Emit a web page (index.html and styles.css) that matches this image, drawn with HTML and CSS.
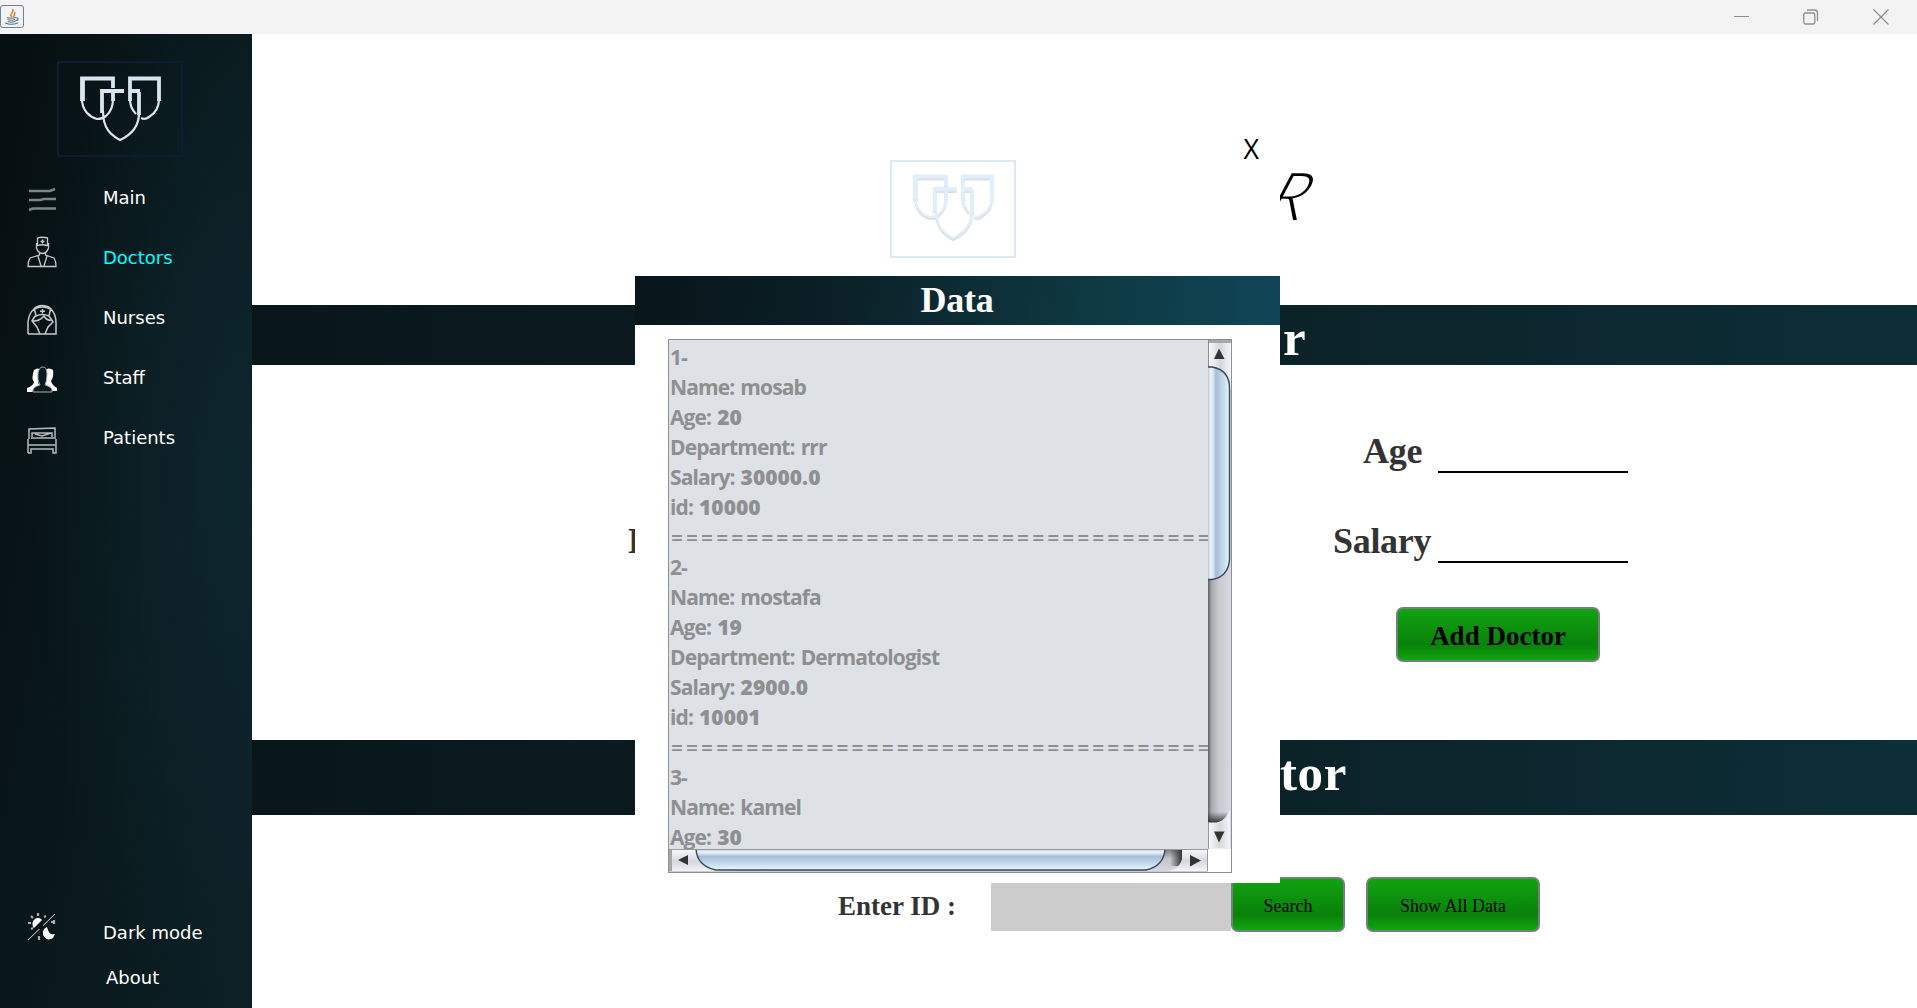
FILE: index.html
```html
<!DOCTYPE html>
<html lang="en">
<head>
<meta charset="utf-8">
<title>Doctors</title>
<link rel="stylesheet" href="styles.css">
</head>
<body>
<svg width="0" height="0" class="defs">
  <symbol id="shields" viewBox="0 0 126 96">
    <g fill="none" stroke="currentColor">
      <path stroke-width="3.800" d="M25 40V17.500H56V27M26 17V40M56 31V40M73 40V17.500H102V40M45 52V30H67M73 30H83M82 31V54"/>
      <path stroke-width="2.200" d="M25 38C25 50 33 56 40 58Q45 58 49 55Q56 49 56 38M73 38C73 46 76 50 79 53M84 57Q88 59 92 56Q102 50 102 38M46 50C46 68 54 74 63 79C74 74 82 66 82 52"/>
    </g>
  </symbol>
</svg>
<header class="titlebar">
  <svg class="java" width="24" height="24" viewBox="0 0 24 24">
    <rect x=".5" y=".5" width="23" height="22" rx="2.500" fill="#f1f3f5" stroke="#6d8296"/>
    <path d="M12 12C8 9 15 8 12.500 4M13 12C17 9 12 10 15.500 7" fill="none" stroke="#e8832a" stroke-width="1.500"/>
    <path d="M7 12.500Q11 14 16 12.500M7.500 14.500Q11 16 15 14.500M8 16.500Q11 18 15 16.500M5 18Q11 20.500 18 18M16 13Q19 12 17.500 15L15 16" fill="none" stroke="#56768f" stroke-width="1.200"/>
  </svg>
  <div class="controls">
    <svg width="15" height="16" viewBox="0 0 15 16"><path d="M0 7.500H15" stroke="#8e8e8e" fill="none"/></svg>
    <svg width="16" height="16" viewBox="0 0 16 16"><g fill="none" stroke="#8e8e8e" stroke-width="1.300"><rect x=".8" y="4" width="11" height="11" rx="1.500"/><path d="M4 1H11.500Q14.500 1 14.500 4V12"/></g></svg>
    <svg width="16" height="16" viewBox="0 0 16 16"><path d="M.5 .5L15.500 15.500M15.500 .5L.5 15.500" stroke="#8e8e8e" stroke-width="1.200" fill="none"/></svg>
  </div>
</header>
<div class="window">
  <nav class="sidebar">
    <div class="logo"><svg width="126" height="96"><use href="#shields"/></svg></div>
    <a class="item"><svg width="30" height="30" viewBox="0 0 30 30"><path d="M2 6L23 6L28 4M2 15H13L17 14H29M2 25L6 23.500H29" fill="none" stroke="#7d8585" stroke-width="2.500"/></svg><span>Main</span></a>
    <a class="item active"><svg class="doc" width="30" height="32" viewBox="0 0 30 32"><g fill="none" stroke="#c4cacb" stroke-width="1.300"><path d="M10.500 9.500V2Q15 .5 20.500 2V9.500Q15 8 10.500 9.500ZM9.500 7V12Q11 17 15.500 17.500Q20 17 21.500 12V7M12.500 16V19L3 22Q1 25 1 30.500H29Q29 25 27 22L18.500 19V16M11 20L14 30M20 20L17 30"/><path d="M15.500 3.500V7.500M13.500 5.500H17.500" stroke-width="1.600"/></g></svg><span>Doctors</span></a>
    <a class="item"><svg width="30" height="32" viewBox="0 0 30 32"><g fill="none" stroke="#c4cacb" stroke-width="1.500"><path d="M1 30V18Q2 9 7 5Q10 1.500 15 1.500Q21 1.500 24 5Q29 10 29 19V30H1M9 12L7.500 5Q15 1 23.500 5L22 12Q15 9 9 12ZM8 12L5 17L10 23L13 30M22 12L26 18L21 23L18 30M6 17Q13 17 17 12Q20 17 24 16"/><path d="M15.500 5V9.500M13 7.200H18"/></g></svg><span>Nurses</span></a>
    <a class="item"><svg width="30" height="30" viewBox="0 0 30 30"><path d="M7 5Q11 2 14 5L11 9V18L13 21L8 24L5 27H0V23Q6 21 7 17Q4 14 7 5ZM18 5Q22 2 26 5Q27 12 24 16Q25 20 30 23V26H25L19 20V8Z" fill="#fff"/><path d="M6 27Q5 22 13 20Q10 16 11 8Q12 2 16 2Q20 2 20 9Q20 16 18 20Q26 22 25 27Z" fill="#0b1a1f" stroke="#a4abac"/></svg><span>Staff</span></a>
    <a class="item"><svg width="30" height="30" viewBox="0 0 30 30"><g fill="none" stroke="#b4babb" stroke-width="1.500"><path d="M2 14V4L28 3V14M1 28V14M29 14V28H26V24H4V28H1M1 20H29M5 12V8H25V12M8 9L15 11L24 8M4 13H27"/></g></svg><span>Patients</span></a>
    <a class="item mode"><svg width="30" height="30" viewBox="0 0 30 30"><path d="M1 28L28 2" stroke="#ddd" fill="none"/><circle cx="11" cy="11" r="5" fill="#fff"/><path d="M6 16L16 6V17H6Z" fill="#091619"/><path d="M6 15Q4 9 9 7Q14 6 15 8L7 16ZM20 15Q15 17 16 23Q20 30 26 26L28 22Q22 24 20 15Z" fill="#fff"/><path d="M11 1V4M1 11H4M4 4L6 6M17 5L19 4M24 10H28M12 24V28M4 17L6 16M27 8V12" stroke="#a9b0b0" stroke-width="2.200"/></svg><span>Dark mode</span></a>
    <a class="item about"><span>About</span></a>
  </nav>
  <main class="page">
    <div class="hero"><span>R</span></div>
    <h1 class="band"><span>r</span></h1>
    <section class="form">
      <div class="line"><span class="age">Age</span><i class="blank"></i></div>
      <div class="line"><span class="dept">D</span><span class="salary">Salary</span><i class="blank"></i></div>
      <button class="btn add">Add Doctor</button>
    </section>
    <h1 class="band tall"><span>tor</span></h1>
    <section class="search">
      <label>Enter ID :</label>
      <div class="field"></div>
      <button class="btn find">Search</button>
      <button class="btn all">Show All Data</button>
    </section>
  </main>
</div>
<div class="popup">
  <div class="top">
    <div class="mark"><svg width="126" height="96"><use href="#shields" y="1" color="#dcdfe3"/><use href="#shields" y="-1"/></svg></div>
    <span class="close">X</span>
  </div>
  <h2>Data</h2>
  <div class="scroll">
    <div class="list"><p>1-</p><p>Name: mosab</p><p>Age: <b>20</b></p><p>Department: rrr</p><p>Salary: <b>30000.0</b></p><p>id: <b>10000</b></p><p class="rule">====================================</p><p>2-</p><p>Name: mostafa</p><p>Age: <b>19</b></p><p>Department: Dermatologist</p><p>Salary: <b>2900.0</b></p><p>id: <b>10001</b></p><p class="rule">====================================</p><p>3-</p><p>Name: kamel</p><p>Age: <b>30</b></p></div>
    <svg class="vbar" width="23" height="510" viewBox="0 0 23 510">
      <defs>
        <linearGradient id="track"><stop offset="0" stop-color="#5f6064"/><stop offset=".15" stop-color="#a5a6ac"/><stop offset=".45" stop-color="#c9c9d0"/><stop offset="1" stop-color="#d6d9df"/></linearGradient>
        <linearGradient id="thumb"><stop offset="0" stop-color="#b9c8da"/><stop offset=".12" stop-color="#f0f4f9"/><stop offset=".25" stop-color="#d5e0ec"/><stop offset=".36" stop-color="#a7bed6"/><stop offset=".65" stop-color="#c2d6ea"/><stop offset="1" stop-color="#e4f9fd"/></linearGradient>
        <linearGradient id="cap"><stop offset="0" stop-color="#fafafa"/><stop offset=".55" stop-color="#d5d8dc"/><stop offset="1" stop-color="#f5f6f8"/></linearGradient>
        <linearGradient id="shade" x2="0" y2="1"><stop offset="0" stop-color="#333" stop-opacity="0"/><stop offset="1" stop-color="#333"/></linearGradient>
      </defs>
      <rect width="23" height="510" fill="url(#track)"/>
      <rect width="23" height="50" fill="url(#cap)"/><path d="M0 1.500H23" stroke="#a5a7aa" stroke-width="3"/><path d="M.5 0V27" stroke="#8b8d90"/>
      <path d="M6 19L11 8.500L16.500 19Z" fill="#333"/>
      <path d="M0 27H4Q22 31 22 48V220Q20 237 4 239.500H0Z" fill="url(#thumb)"/><path d="M0 27H4Q21.500 30 21.500 48V220Q20 237 4 239.500H0" fill="none" stroke="#34495c" stroke-width="1.400"/>
      <path d="M0 472H20Q17 481 9 483H0Z" fill="url(#shade)"/>
      <path d="M0 483H9Q19 481 22 470V509H0Z" fill="url(#cap)"/><path d="M0 483H9Q19 481 22 470M0 508.500H23" fill="none" stroke="#eee"/>
      <path d="M6 491.500H16.500L11 502.500Z" fill="#333"/>
      <path d="M.5 483V510" stroke="#999"/>
    </svg>
    <svg class="hbar" width="539" height="23" viewBox="0 0 539 23">
      <defs>
        <linearGradient id="htrack" x2="0" y2="1"><stop offset="0" stop-color="#77787c"/><stop offset=".4" stop-color="#c4c5cb"/><stop offset="1" stop-color="#d6d9df"/></linearGradient>
        <linearGradient id="hshade"><stop offset="0" stop-color="#333" stop-opacity="0"/><stop offset="1" stop-color="#333"/></linearGradient>
        <linearGradient id="hthumb" x2="0" y2="1"><stop offset="0" stop-color="#b9c8da"/><stop offset=".15" stop-color="#f0f4f9"/><stop offset=".36" stop-color="#a7bed6"/><stop offset=".65" stop-color="#c2d6ea"/><stop offset="1" stop-color="#e4f9fd"/></linearGradient>
        <linearGradient id="hcap" x2="0" y2="1"><stop offset="0" stop-color="#fafafa"/><stop offset=".55" stop-color="#d5d8dc"/><stop offset="1" stop-color="#f5f6f8"/></linearGradient>
      </defs>
      <rect width="539" height="23" fill="url(#htrack)"/>
      <rect x="501" width="12" height="17" fill="url(#hshade)"/>
      <rect width="60" height="23" fill="url(#hcap)"/><path d="M1.500 0V23" stroke="#a5a7aa" stroke-width="3"/>
      <path d="M9 11L19 6V16Z" fill="#333"/>
      <path d="M27 0Q28 17 47 21H477Q495 17 496 0Z" fill="url(#hthumb)"/><path d="M27 0Q28 17 47 21H477Q495 17 496 0" fill="none" stroke="#34495c" stroke-width="1.400"/>
      <path d="M513 0V10Q511 19 501 22H539V0Z" fill="url(#hcap)"/>
      <path d="M521 6L532 11.500L521 17.500Z" fill="#333"/><path d="M0 .5H539M538.500 0V23" stroke="#999"/><path d="M0 22.500H539" stroke="#ccc"/>
    </svg>
    <i class="corner"></i>
  </div>
</div>
</body>
</html>
```
FILE: styles.css
```css
* { box-sizing: border-box; }
body { margin: 0; width: 1917px; height: 1008px; overflow: hidden; position: relative; background: #fff; font-family: "Liberation Serif", "Times New Roman", serif; color: #333; }
.defs { position: absolute; }
h1, h2, p { margin: 0; }
.titlebar { height: 34px; background: #f3f3f3; display: flex; justify-content: space-between; align-items: flex-start; }
.java { margin-top: 5px; }
.controls { display: flex; margin: 9px 28px 0 0; width: 155px; justify-content: space-between; }
.window { display: flex; height: 974px; }
.sidebar { width: 252px; padding-top: 27px; display: flex; flex-direction: column; background: radial-gradient(ellipse 220px 560px at 100% 46%, #0d262d, #0b1f2500), linear-gradient(100deg, #060f11, #0a191d 55%, #0c2026); font: 18px/24px "DejaVu Sans", Verdana, sans-serif; color: #fff; }
.logo { width: 126px; height: 96px; margin: 0 0 17px 57px; border: 2px solid #0b1c33; color: #d9e4ef; flex: none; }
.logo svg, .mark svg { display: block; margin: -2px; }
.item { height: 60px; padding-left: 27px; display: grid; grid-template-columns: 76px 1fr; align-items: center; flex: none; white-space: nowrap; }
.item span { margin-top: -12px; }
.item svg { margin-top: -8px; }
.item .doc { margin-top: -24px; }
.active { color: #0ff; }
.mode { margin-top: 442px; height: 45px; }
.mode svg { margin-top: -23px; }
.about { height: 45px; }
.about span { grid-column: 2; padding-left: 3px; }
.page { flex: 1; display: flex; flex-direction: column; }
.hero { height: 271px; padding: 123px 0 0 1021px; font: italic 300 66px/76px Lato, sans-serif; color: #000; }
.hero span { display: inline-block; transform: skewX(-22deg); }
.band { height: 60px; flex: none; background: linear-gradient(90deg, #09171b, #0b1b20 30%, #0c232a 65%, #0d2e37); color: #fff; font-size: 51px; line-height: 66px; padding-left: 1031px; overflow: hidden; }
.tall { height: 75px; padding-left: 1028px; letter-spacing: .6px; }
.form { height: 375px; padding-top: 52px; font-size: 36px; font-weight: bold; letter-spacing: -.3px; }
.line { height: 90px; display: flex; line-height: 68px; }
.blank { width: 190px; height: 2px; background: #000; margin-top: 54px; }
.age { padding-left: 1111px; width: 1186px; }
.dept { padding-left: 376px; width: 1081px; }
.salary { width: 105px; }
.btn { display: block; height: 55px; padding: 2px 0 0; border: 2px solid #74807a; border-radius: 7px; background: linear-gradient(#11a211, #0a840b 65%, #0a840b 72%, #10a610); font: 18px/1 "Liberation Serif", serif; color: #000; }
.add { width: 204px; padding-top: 4px; font-size: 27px; font-weight: bold; margin: 10px 0 0 1144px; }
.search { display: flex; padding: 62px 0 0 586px; }
.search label { width: 153px; font-weight: bold; font-size: 27px; line-height: 58px; }
.field { width: 240px; height: 54px; background: #ccc; }
.find { width: 114px; }
.all { width: 174px; margin-left: 21px; }
.popup { position: absolute; left: 635px; top: 133px; width: 645px; height: 750px; background: #fff; }
.top { height: 143px; display: flex; padding: 27px 21px 0 255px; justify-content: space-between; }
.mark { width: 126px; height: 98px; border: 2px solid #dce7f8; color: #e0effc; }
.close { font: 27px/27px "Open Sans", sans-serif; color: #000; margin-top: -25px; }
.popup h2 { height: 49px; background: linear-gradient(95deg, #08151a, #0b2027 32%, #0d2f38 55%, #0e3c46 76%, #104557); color: #fff; font-size: 36px; line-height: 49px; text-align: center; letter-spacing: -.3px; padding-right: 1px; }
.scroll { margin: 14px 0 0 33px; width: 564px; height: 534px; border: 1px solid #8b8f9b; display: grid; grid-template-columns: 539px 23px; grid-template-rows: 509px 23px; overflow: hidden; }
.list { background: #dee1e6; padding: 2px 0 0 1px; overflow: hidden; color: #8e8f91; font: bold 21px/30px "Open Sans", sans-serif; letter-spacing: -.9px; word-spacing: 1.500px; white-space: nowrap; }
.list p { height: 30px; }
.list b { letter-spacing: 0; }
.list .rule { letter-spacing: 3.040px; padding-left: 1px; font-weight: 600; line-height: 32px; }
.vbar, .hbar { display: block; }
.corner { background: #fff; }
```
